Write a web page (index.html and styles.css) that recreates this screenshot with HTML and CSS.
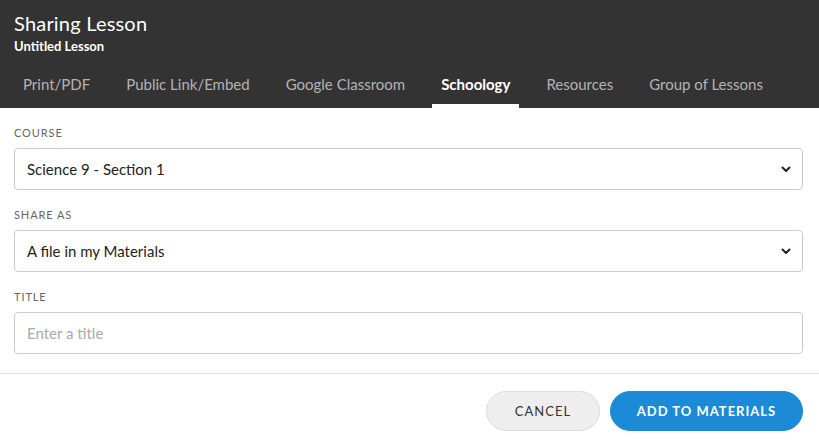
FILE: index.html
```html
<!DOCTYPE html>
<html>
<head>
<meta charset="utf-8">
<link rel="stylesheet" href="styles.css">
</head>
<body>
<div class="dialog">
  <header class="head">
    <h1 class="title">Sharing Lesson</h1>
    <div class="subtitle">Untitled Lesson</div>
    <nav class="tabs">
      <span class="tab">Print/PDF</span>
      <span class="tab">Public Link/Embed</span>
      <span class="tab">Google Classroom</span>
      <span class="tab active">Schoology</span>
      <span class="tab">Resources</span>
      <span class="tab">Group of Lessons</span>
    </nav>
  </header>
  <main class="form">
    <div class="field">
      <label class="label">COURSE</label>
      <div class="select">
        <span>Science 9 - Section 1</span>
        <svg class="chev" width="10" height="7" viewBox="0 0 10 7"><path d="M1.5 1.5 L5 5 L8.5 1.5" fill="none" stroke="#222" stroke-width="2" stroke-linecap="round" stroke-linejoin="round"/></svg>
      </div>
    </div>
    <div class="field">
      <label class="label">SHARE AS</label>
      <div class="select">
        <span>A file in my Materials</span>
        <svg class="chev" width="10" height="7" viewBox="0 0 10 7"><path d="M1.5 1.5 L5 5 L8.5 1.5" fill="none" stroke="#222" stroke-width="2" stroke-linecap="round" stroke-linejoin="round"/></svg>
      </div>
    </div>
    <div class="field">
      <label class="label">TITLE</label>
      <div class="input"><span class="placeholder">Enter a title</span></div>
    </div>
  </main>
  <footer class="foot">
    <button class="btn cancel">CANCEL</button>
    <button class="btn primary">ADD TO MATERIALS</button>
  </footer>
</div>
</body>
</html>
```
FILE: styles.css
```css
* { box-sizing: border-box; }
html, body { margin: 0; padding: 0; background: #fff; }
body { font-family: Lato, "Open Sans", sans-serif; color: #333; }
.dialog { width: 819px; height: 445px; display: flex; flex-direction: column; }
.head { background: #333333; padding: 12px 14px 0; height: 108px; display: flex; flex-direction: column; }
.title { margin: 0; font-size: 20px; font-weight: 400; color: #fff; line-height: 22px; letter-spacing: 0.2px; }
.subtitle { font-size: 13px; font-weight: 700; color: #fff; line-height: 14px; margin-top: 5px; }
.tabs { display: flex; gap: 18px; margin-top: auto; }
.tab { font-size: 15px; color: #b3b3b3; padding: 0 9px 8px; height: 36px; line-height: 24px; border-bottom: 4px solid transparent; }
.tab.active { color: #fff; font-weight: 700; border-bottom-color: #fff; }
.form { padding: 18px 16px 0 14px; display: flex; flex-direction: column; gap: 18px; }
.field { display: flex; flex-direction: column; gap: 8px; }
.label { font-size: 11px; line-height: 14px; letter-spacing: 0.9px; color: #666; }
.select, .input { height: 42px; border: 1px solid #ccc; border-radius: 4px; display: flex; align-items: center; justify-content: space-between; padding: 0 11px 0 12px; font-size: 15px; color: #222; }
.placeholder { color: #aaa; }
.foot { margin-top: 19px; border-top: 1px solid #ddd; padding: 17px 16px 0; display: flex; justify-content: flex-end; gap: 10px; }
.btn { height: 40px; border-radius: 20px; font-family: Lato, sans-serif; font-size: 13px; letter-spacing: 1px; padding: 0; cursor: pointer; }
.cancel { width: 114px; background: #eeeeee; border: 1px solid #dddddd; color: #333; }
.primary { width: 193px; background: #1b8bd8; border: 1px solid #1b8bd8; color: #fff; font-weight: 700; }
```
